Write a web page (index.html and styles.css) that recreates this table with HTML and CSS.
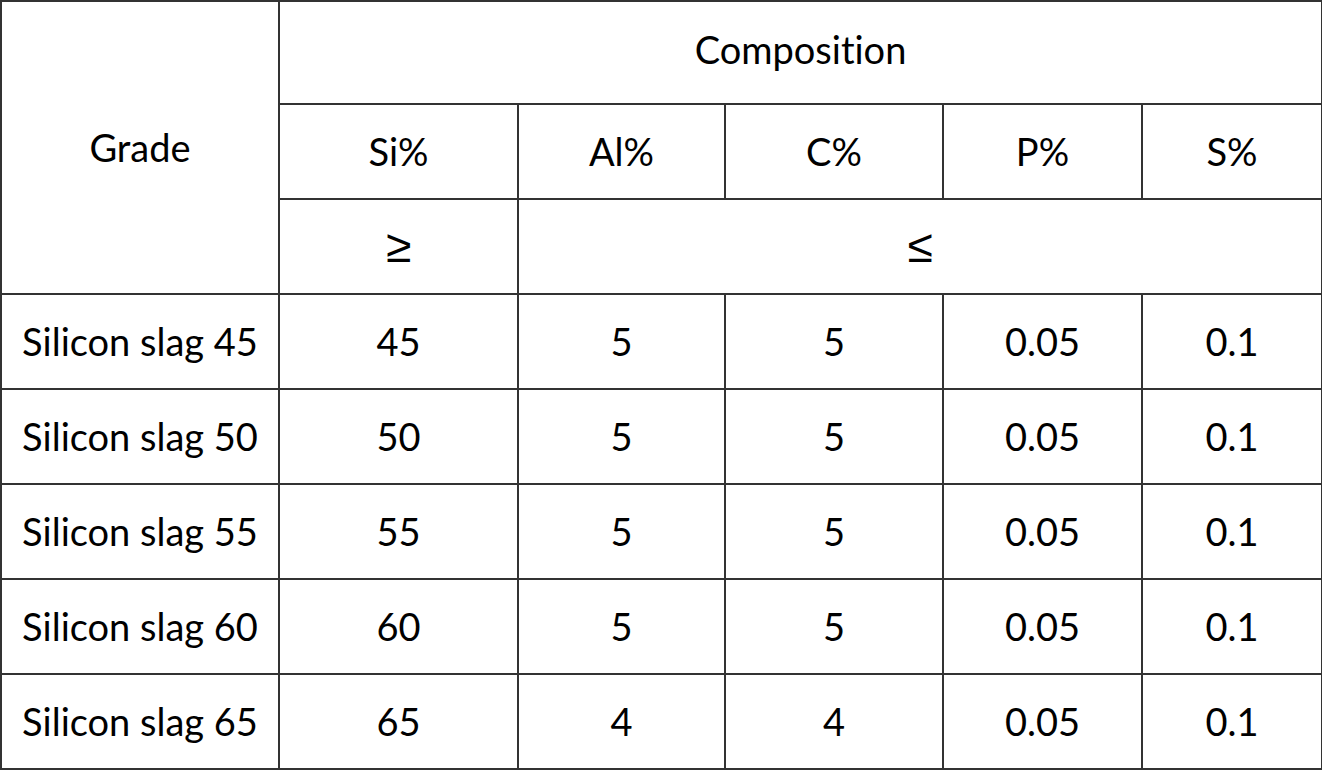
FILE: index.html
```html
<!DOCTYPE html>
<html>
<head>
<meta charset="utf-8">
<link rel="stylesheet" href="styles.css">
</head>
<body>
<table class="spec">
  <colgroup>
    <col class="c-grade">
    <col class="c-si">
    <col class="c-al">
    <col class="c-c">
    <col class="c-p">
    <col class="c-s">
  </colgroup>
  <tbody>
    <tr class="r-top">
      <td rowspan="3">Grade</td>
      <td colspan="5" class="title">Composition</td>
    </tr>
    <tr><td>Si%</td><td>Al%</td><td>C%</td><td>P%</td><td>S%</td></tr>
    <tr><td><span class="sym">≥</span></td><td colspan="4"><span class="sym">≤</span></td></tr>
    <tr><td>Silicon slag 45</td><td>45</td><td>5</td><td>5</td><td>0.05</td><td>0.1</td></tr>
    <tr><td>Silicon slag 50</td><td>50</td><td>5</td><td>5</td><td>0.05</td><td>0.1</td></tr>
    <tr><td>Silicon slag 55</td><td>55</td><td>5</td><td>5</td><td>0.05</td><td>0.1</td></tr>
    <tr><td>Silicon slag 60</td><td>60</td><td>5</td><td>5</td><td>0.05</td><td>0.1</td></tr>
    <tr><td>Silicon slag 65</td><td>65</td><td>4</td><td>4</td><td>0.05</td><td>0.1</td></tr>
  </tbody>
</table>
</body>
</html>
```
FILE: styles.css
```css
html, body {
  margin: 0;
  padding: 0;
  background: #ffffff;
}

.spec {
  border-collapse: collapse;
  table-layout: fixed;
  width: 1321px;
  font-family: "Lato", "Open Sans", sans-serif;
  font-size: 38px;
  line-height: 1.2;
  font-variant-ligatures: none;
  color: #000;
  border-left: 2px solid #c0c0c0;
}

.spec td {
  border: 2px solid #333333;
  text-align: center;
  vertical-align: middle;
  padding: 0;
  height: 95px;
  box-sizing: border-box;
}

.spec tr.r-top td {
  height: 103px;
}

.spec td.title {
  padding-bottom: 6px;
}

.sym {
  font-family: "Liberation Sans", sans-serif;
  font-size: 46px;
  line-height: 1;
}

.c-grade { width: 278px; }
.c-si { width: 239px; }
.c-al { width: 207px; }
.c-c { width: 218px; }
.c-p { width: 199px; }
.c-s { width: 180px; }
```
